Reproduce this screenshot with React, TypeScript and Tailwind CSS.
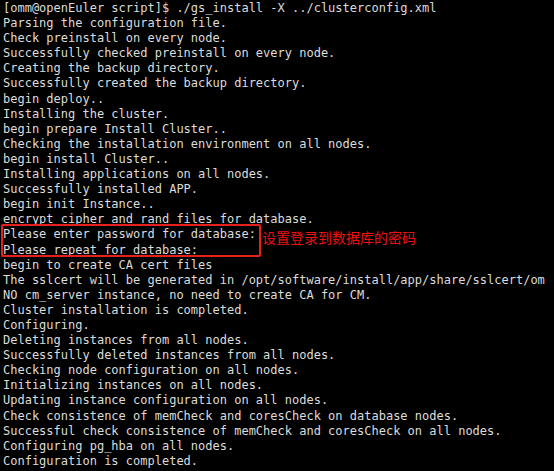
import React from 'react';

const before = [
  '[omm@openEuler script]$ ./gs_install -X ../clusterconfig.xml',
  'Parsing the configuration file.',
  'Check preinstall on every node.',
  'Successfully checked preinstall on every node.',
  'Creating the backup directory.',
  'Successfully created the backup directory.',
  'begin deploy..',
  'Installing the cluster.',
  'begin prepare Install Cluster..',
  'Checking the installation environment on all nodes.',
  'begin install Cluster..',
  'Installing applications on all nodes.',
  'Successfully installed APP.',
  'begin init Instance..',
  'encrypt cipher and rand files for database.',
];

const after = [
  'begin to create CA cert files',
  'The sslcert will be generated in /opt/software/install/app/share/sslcert/om',
  'NO cm_server instance, no need to create CA for CM.',
  'Cluster installation is completed.',
  'Configuring.',
  'Deleting instances from all nodes.',
  'Successfully deleted instances from all nodes.',
  'Checking node configuration on all nodes.',
  'Initializing instances on all nodes.',
  'Updating instance configuration on all nodes.',
  'Check consistence of memCheck and coresCheck on database nodes.',
  'Successful check consistence of memCheck and coresCheck on all nodes.',
  'Configuring pg_hba on all nodes.',
  'Configuration is completed.',
];

const Line: React.FC<{ text: string }> = ({ text }) => (
  <div className="whitespace-pre h-[15.1px]">{text}</div>
);

export default function App() {
  return (
    <div className="w-[554px] h-[471px] overflow-hidden bg-black text-[#dcdcdc] font-['DejaVu_Sans_Mono',monospace] text-[12px] leading-[15.1px] pl-[3px] pt-[1px]">
      {before.map((t, i) => (
        <Line key={i} text={t} />
      ))}
      <div className="relative">
        <Line text="Please enter password for database:" />
        <Line text="Please repeat for database:" />
        {/* annotation box */}
        <div className="absolute left-[-2px] top-[-3px] w-[260px] h-[33px] border-2 border-[#e8201c] rounded-[2px]" />
        <div className="absolute left-[259px] top-[2px] text-[14px] leading-[16px] text-[#f01010] font-['Noto_Sans_CJK_SC',sans-serif]">
          设置登录到数据库的密码
        </div>
      </div>
      {after.map((t, i) => (
        <Line key={i} text={t} />
      ))}
    </div>
  );
}
